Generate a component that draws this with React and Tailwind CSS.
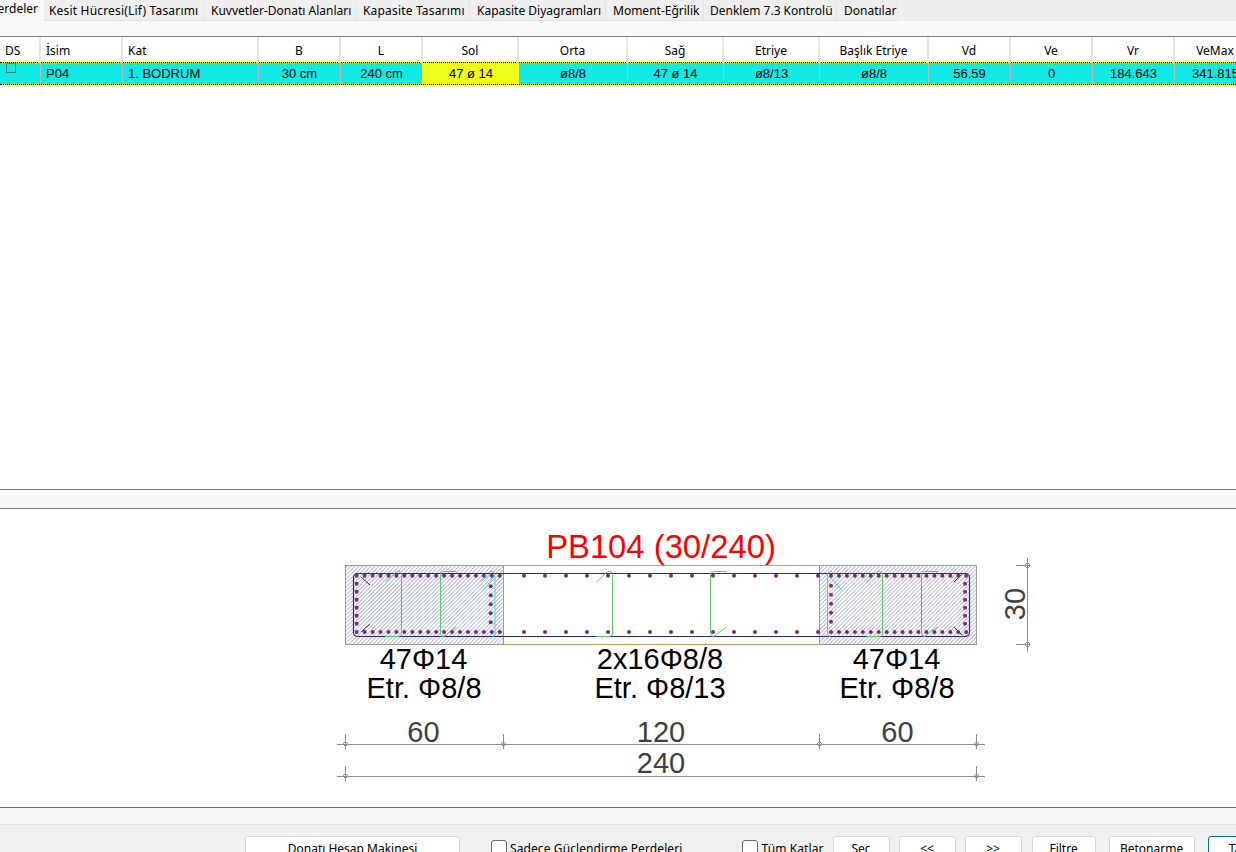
const tabs = [
  ["Kesit Hücresi(Lif) Tasarımı", "w-[160px] pl-[5px] tracking-[0.18px]"],
  ["Kuvvetler-Donatı Alanları", "w-[152px] pl-[7px]"],
  ["Kapasite Tasarımı", "w-[114px] pl-[7px] tracking-[0.18px]"],
  ["Kapasite Diyagramları", "w-[136px] pl-[7px]"],
  ["Moment-Eğrilik", "w-[98px] pl-[7px]"],
  ["Denklem 7.3 Kontrolü", "w-[133px] pl-[6px]"],
  ["Donatılar", "w-[61px] pl-[7px]"],
];
const cols = "grid grid-cols-[41px_82px_136px_82px_82px_96px_109px_96px_96px_109px_82px_82px_82px_82px]";
const heads = ["DS", "İsim", "Kat", "B", "L", "Sol", "Orta", "Sağ", "Etriye", "Başlık Etriye", "Vd", "Ve", "Vr", "VeMax"];
const vals = ["30 cm", "240 cm", "47 ø 14", "ø8/8", "47 ø 14", "ø8/13", "ø8/8", "56.59", "0", "184.643", "341.815"];

const range = (start, step, n) => Array.from({ length: n }, (_, i) => start + i * step);
const dots = [
  ...range(356.7, 7.95, 19).map((x) => [x, 575.7]),
  ...range(356.7, 7.95, 19).map((x) => [x, 632]),
  ...range(583.7, 8, 6).map((y) => [356.7, y]),
  ...range(586.2, 9, 5).map((y) => [490.7, y]),
  ...range(524, 21, 15).map((x) => [x, 575.7]),
  ...range(524, 21, 15).map((x) => [x, 632]),
  ...range(831, 7.95, 18).map((x) => [x, 575.7]),
  ...range(831, 7.95, 18).map((x) => [x, 632]),
  ...range(585.7, 9, 5).map((y) => [831, y]),
  ...range(583.7, 8, 6).map((y) => [965, y]),
];

function Tick({ x, y }) {
  return (
    <g stroke="#8e8e8e" fill="none" strokeWidth="1">
      <line x1={x} y1={y - 10} x2={x} y2={y + 5} />
      <path d={`M${x - 2.5} ${y}L${x} ${y - 2.5}L${x + 2.5} ${y}L${x} ${y + 2.5}Z`} />
    </g>
  );
}

/* Opens left: short top corner with hook, long bottom leg */
function StirrupA({ x, color }) {
  return (
    <g stroke={color} fill="none" strokeWidth="1">
      <path d={`M${x - 5} 571.5H${x - 3}Q${x} 571.5 ${x} 575V633Q${x} 636.5 ${x - 3} 636.5H${x - 16}`} />
      <line x1={x - 5} y1="571.5" x2={x - 16} y2="582" />
    </g>
  );
}

/* Opens right: long top leg, short bottom corner with hook */
function StirrupB({ x, color }) {
  return (
    <g stroke={color} fill="none" strokeWidth="1">
      <path d={`M${x + 16} 571.5H${x + 3}Q${x} 571.5 ${x} 575V633Q${x} 636.5 ${x + 3} 636.5`} />
      <line x1={x + 3} y1="636.5" x2={x + 16} y2="627" />
    </g>
  );
}

function Drawing() {
  return (
    <svg width="700" height="298" viewBox="330 509 700 298" className="block" fontFamily="'Liberation Sans', Arial, sans-serif">
      <defs>
        <pattern id="hatch" width="2.83" height="2.83" patternUnits="userSpaceOnUse" patternTransform="rotate(45)">
          <line x1="0" y1="0" x2="0" y2="2.83" stroke="#919cb8" strokeWidth="1.35" />
        </pattern>
      </defs>
      <text x="661" y="558" textAnchor="middle" fill="#ff0000" fontSize="32.8">PB104 (30/240)</text>

      <line x1="503" y1="565.5" x2="820" y2="565.5" stroke="#d39a62" />
      <line x1="503" y1="644.5" x2="820" y2="644.5" stroke="#d39a62" />
      <rect x="345.5" y="565.5" width="158" height="79" fill="url(#hatch)" stroke="#9c9c9c" />
      <rect x="819.5" y="565.5" width="157" height="79" fill="url(#hatch)" stroke="#9c9c9c" />
      <rect x="353.5" y="573.5" width="616" height="63" rx="4" fill="none" stroke="#2c2a82" strokeWidth="1.2" />
      <g stroke="#2c2a82" strokeWidth="1">
        <line x1="361" y1="577" x2="370" y2="585" />
        <line x1="361" y1="632" x2="370" y2="624" />
        <line x1="962" y1="574" x2="954" y2="582" />
        <line x1="954" y1="627" x2="962" y2="635" />
      </g>

      <StirrupA x={401.5} color="#5fc864" />
      <StirrupB x={440.5} color="#5fc864" />
      <g stroke="#4fcfd0" fill="none" strokeWidth="1">
        <path d="M490 571.5H492Q495 571.5 495 575V633Q495 636.5 492 636.5" />
        <line x1="490" y1="574" x2="480" y2="582" />
        <line x1="494" y1="576" x2="484" y2="590" />
      </g>
      <StirrupA x={612.5} color="#5fc864" />
      <StirrupB x={710.5} color="#5fc864" />
      <g stroke="#4fcfd0" fill="none" strokeWidth="1">
        <path d="M832 571.5H830.5Q827.5 571.5 827.5 575V633Q827.5 636.5 830.5 636.5" />
        <line x1="829" y1="576" x2="842" y2="590" />
      </g>
      <StirrupA x={882.5} color="#5fc864" />
      <StirrupB x={921.5} color="#5fc864" />

      {dots.map(([x, y], i) => (
        <circle key={i} cx={x} cy={y} r="2" fill="#7b2a82" />
      ))}

      <g fill="#000" fontSize="29" textAnchor="middle">
        <text x="423.5" y="669">47Φ14</text>
        <text x="424" y="698">Etr. Φ8/8</text>
        <text x="660" y="669">2x16Φ8/8</text>
        <text x="660" y="698">Etr. Φ8/13</text>
        <text x="896.5" y="669">47Φ14</text>
        <text x="897" y="698">Etr. Φ8/8</text>
      </g>

      <g stroke="#8e8e8e" strokeWidth="1" fill="none">
        <line x1="1027.5" y1="558" x2="1027.5" y2="652" />
        <line x1="1016" y1="565.5" x2="1038" y2="565.5" />
        <line x1="1016" y1="644.5" x2="1038" y2="644.5" />
        <path d="M1024.5 565.5L1027.5 562.5L1030.5 565.5L1027.5 568.5Z" />
        <path d="M1024.5 644.5L1027.5 641.5L1030.5 644.5L1027.5 647.5Z" />
        <line x1="337" y1="744.5" x2="985" y2="744.5" />
        <line x1="337" y1="776.5" x2="985" y2="776.5" />
      </g>
      {[345, 503, 819, 976].map((x) => <Tick key={x} x={x + 0.5} y={744} />)}
      {[345, 976].map((x) => <Tick key={x} x={x + 0.5} y={776} />)}

      <g fill="#404040" fontSize="29" textAnchor="middle">
        <text x="423.5" y="742">60</text>
        <text x="661" y="742">120</text>
        <text x="897.5" y="742">60</text>
        <text x="661" y="773">240</text>
        <text x="1024.5" y="604" transform="rotate(-90 1024.5 604)">30</text>
      </g>
    </svg>
  );
}

function Btn({ className, focused, children }) {
  return (
    <button className={`flex h-[30px] shrink-0 justify-center rounded-[3px] border bg-white pt-[4px] text-[12px] leading-[16px] text-black ${focused ? "border-[#0a66c2]" : "border-[#d6d6d6]"} ${className}`}>
      {children}
    </button>
  );
}

function Check({ className, children }) {
  return (
    <label className={`flex shrink-0 items-start gap-[3px] pt-[4px] text-[12px] leading-[16px] tracking-[0.1px] text-black ${className}`}>
      <span className="h-[20px] w-[16px] shrink-0 rounded-[3px] border border-[#6a6a6a] bg-white" />
      <span className="pt-[1px]">{children}</span>
    </label>
  );
}

export default function App() {
  return (
    <div className="flex h-[852px] w-[1236px] flex-col overflow-hidden bg-white font-['Noto_Sans','Liberation_Sans',sans-serif] text-[12px] text-black">
      <div className="h-[36px] shrink-0 bg-[#f9f9f9]">
        <div className="flex h-[21px] bg-[#efefef]">
          <div className="flex h-[21px] w-[44px] shrink-0 justify-end overflow-hidden whitespace-nowrap bg-[#f9f9f9] pr-[6px] leading-[17px]">Perdeler</div>
          {tabs.map(([t, w]) => (
            <div key={t} className={`h-[21px] shrink-0 whitespace-nowrap border-r border-b border-[#e4e4e4] leading-[21px] ${w}`}>{t}</div>
          ))}
        </div>
      </div>

      <div className="h-[453px] shrink-0 overflow-hidden border-t border-[#808080]">
        <div className={`${cols} h-[25px] text-center leading-[28px]`}>
          {heads.map((h, i) => (
            <div key={h} className={`border-r-2 border-[#e6e6e6] ${i < 3 ? "pl-[5px] text-left" : ""}`}>{h}</div>
          ))}
        </div>
        <div className={`${cols} h-[23px] grid-rows-[21px] border-y border-dotted border-black bg-[#eef000] text-center font-['Liberation_Sans',Arial,sans-serif] text-[13px] leading-[22px]`}>
          <div className="border-r border-[#b9b9b9] bg-[#12e8e4] pl-[6px]">
            <div className="h-[10px] w-[10px] border border-[#2f7f80]" />
          </div>
          <div className="border-r border-[#b9b9b9] bg-[#12e8e4] pl-[5px] text-left">P04</div>
          <div className="border-r border-[#b9b9b9] bg-[#12e8e4] pl-[5px] text-left">1. BODRUM</div>
          {vals.map((v, i) => (
            <div
              key={i}
              className={
                i === 2
                  ? "bg-[#eeff1a]"
                  : i === 1
                    ? "border-r border-[#eeff1a] bg-[#12e8e4]"
                    : "border-r border-[#b9b9b9] bg-[#12e8e4]"
              }
            >
              {v}
            </div>
          ))}
        </div>
      </div>

      <div className="h-[20px] shrink-0 border-y border-[#7c7c7c] bg-[#f8f8f8]" />

      <div className="h-[298px] shrink-0 bg-white pl-[330px]">
        <Drawing />
      </div>

      <div className="h-[17px] shrink-0 border-t border-[#707070] bg-[#f8f8f8]" />

      <div className="flex min-h-0 flex-1 items-start overflow-hidden border-t border-[#e6e6e6] bg-[#f0f0f0] pl-[245px] pt-[11px]">
        <Btn className="w-[215px]">Donatı Hesap Makinesi</Btn>
        <Check className="ml-[31px]">Sadece Güçlendirme Perdeleri</Check>
        <Check className="ml-[60px]">Tüm Katlar</Check>
        <Btn className="ml-[9px] w-[57px]">Seç</Btn>
        <Btn className="ml-[9px] w-[57px]">&lt;&lt;</Btn>
        <Btn className="ml-[9px] w-[57px]">&gt;&gt;</Btn>
        <Btn className="ml-[10px] w-[64px]">Filtre</Btn>
        <Btn className="ml-[13px] w-[86px]">Betonarme</Btn>
        <Btn focused className="ml-[13px] w-[84px]">Tamam</Btn>
      </div>
    </div>
  );
}
